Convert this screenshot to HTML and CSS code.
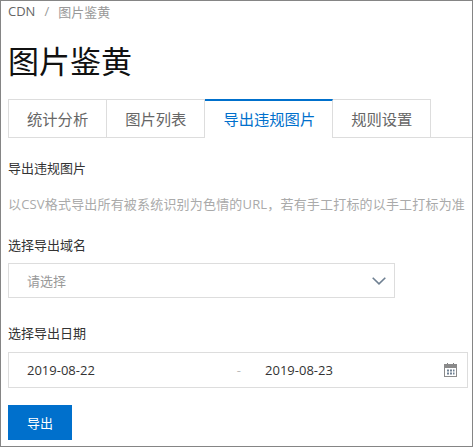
FILE: index.html
```html
<!DOCTYPE html>
<html lang="zh-CN">
<head>
    <meta charset="UTF-8">
    <title>图片鉴黄</title>
    <link rel="stylesheet" href="styles.css">
</head>
<body>
    <div class="page">
        <!-- Breadcrumb -->
        <div class="breadcrumb">
            <span class="crumb">CDN</span>
            <span class="crumb-sep">/</span>
            <span class="crumb-current">图片鉴黄</span>
        </div>

        <h1 class="title">图片鉴黄</h1>

        <!-- Tabs -->
        <div class="tabs">
            <div class="tab">统计分析</div>
            <div class="tab">图片列表</div>
            <div class="tab active">导出违规图片</div>
            <div class="tab">规则设置</div>
        </div>

        <!-- Export form -->
        <div class="section-title">导出违规图片</div>
        <p class="section-desc">以CSV格式导出所有被系统识别为色情的URL，若有手工打标的以手工打标为准</p>

        <div class="field-label first">选择导出域名</div>
        <div class="select-box">
            <span class="placeholder">请选择</span>
            <svg class="chevron" width="14" height="8" viewBox="0 0 14 8">
                <path d="M0.7 0.7 L7 6.8 L13.3 0.7" fill="none" stroke="#6f8092" stroke-width="1.6"/>
            </svg>
        </div>

        <div class="field-label second">选择导出日期</div>
        <div class="date-box">
            <span class="date-from">2019-08-22</span>
            <span class="date-sep">-</span>
            <span class="date-to">2019-08-23</span>
            <svg class="calendar" width="13" height="14" viewBox="0 0 13 14">
                <path d="M3.5 0 V3 M9.5 0 V3" stroke="#7f7f7f" stroke-width="1" fill="none"/>
                <rect x="0.5" y="1.5" width="12" height="12" fill="none" stroke="#8a8a8a"/>
                <rect x="1" y="2" width="11" height="3" fill="#8a8a8a"/>
                <path d="M3 7.5 H5 M6 7.5 H8 M9 7.5 H10.5 M3 10.5 H5 M6 10.5 H8 M9 10.5 H10.5" stroke="#6f8092" stroke-width="1.8" fill="none"/>
            </svg>
        </div>

        <button class="btn-export">导出</button>
    </div>
</body>
</html>
```

FILE: styles.css
```css
* {
    box-sizing: border-box;
    margin: 0;
    padding: 0;
    font-family: "Open Sans", "Noto Sans CJK SC", sans-serif;
}
body {
    background-color: #fff;
}

.page {
    width: 473px;
    height: 447px;
    padding: 0 0 0 7px;
    border: 1px solid #858585;
    overflow: hidden;
}

/* Breadcrumb */
.breadcrumb {
    display: flex;
    align-items: center;
    height: 20px;
    font-size: 13px;
    color: #666;
}
.crumb-sep {
    margin: 0 9px;
    color: #999;
}
.crumb-current {
    color: #999;
}

.title {
    margin-top: 20px;
    height: 58px;
    font-size: 31px;
    line-height: 40px;
    font-weight: 400;
    color: #111;
}

/* Tabs */
.tabs {
    display: flex;
    height: 39px;
    border-bottom: 1px solid #ddd;
}
.tab {
    height: 39px;
    padding: 0 18px;
    border: 1px solid #ddd;
    border-left: none;
    font-size: 15.3px;
    line-height: 38px;
    color: #666;
    background-color: #fff;
}
.tab:first-child {
    border-left: 1px solid #ddd;
}
.tab.active {
    border-top: 2px solid #0070cc;
    border-bottom: none;
    line-height: 37px;
    color: #0070cc;
    padding: 0 17px 0 18px;
}

/* Form */
.section-title {
    margin-top: 20px;
    font-size: 13px;
    line-height: 20px;
    color: #333;
}
.section-desc {
    margin-top: 16px;
    font-size: 13px;
    line-height: 20px;
    letter-spacing: 0.18px;
    color: #aaa;
    white-space: nowrap;
}
.field-label {
    font-size: 13px;
    line-height: 20px;
    color: #333;
}
.field-label.first {
    margin-top: 21px;
}
.field-label.second {
    margin-top: 25px;
}
.select-box {
    display: flex;
    align-items: center;
    justify-content: space-between;
    width: 387px;
    height: 35px;
    margin-top: 8px;
    padding: 0 8px 0 18px;
    border: 1px solid #ddd;
    font-size: 13px;
}
.placeholder {
    color: #999;
}
.date-box {
    display: flex;
    align-items: center;
    width: 460px;
    height: 36px;
    margin-top: 9px;
    padding: 0 10px 0 18px;
    border: 1px solid #ddd;
    font-size: 13px;
    color: #333;
}
.date-sep {
    margin-left: 142px;
    color: #bbb;
}
.date-to {
    margin-left: 24px;
}
.calendar {
    margin-left: auto;
}
.btn-export {
    display: block;
    width: 64px;
    height: 35px;
    margin-top: 17px;
    border: none;
    background-color: #0070cc;
    color: white;
    font-size: 13px;
}
```
